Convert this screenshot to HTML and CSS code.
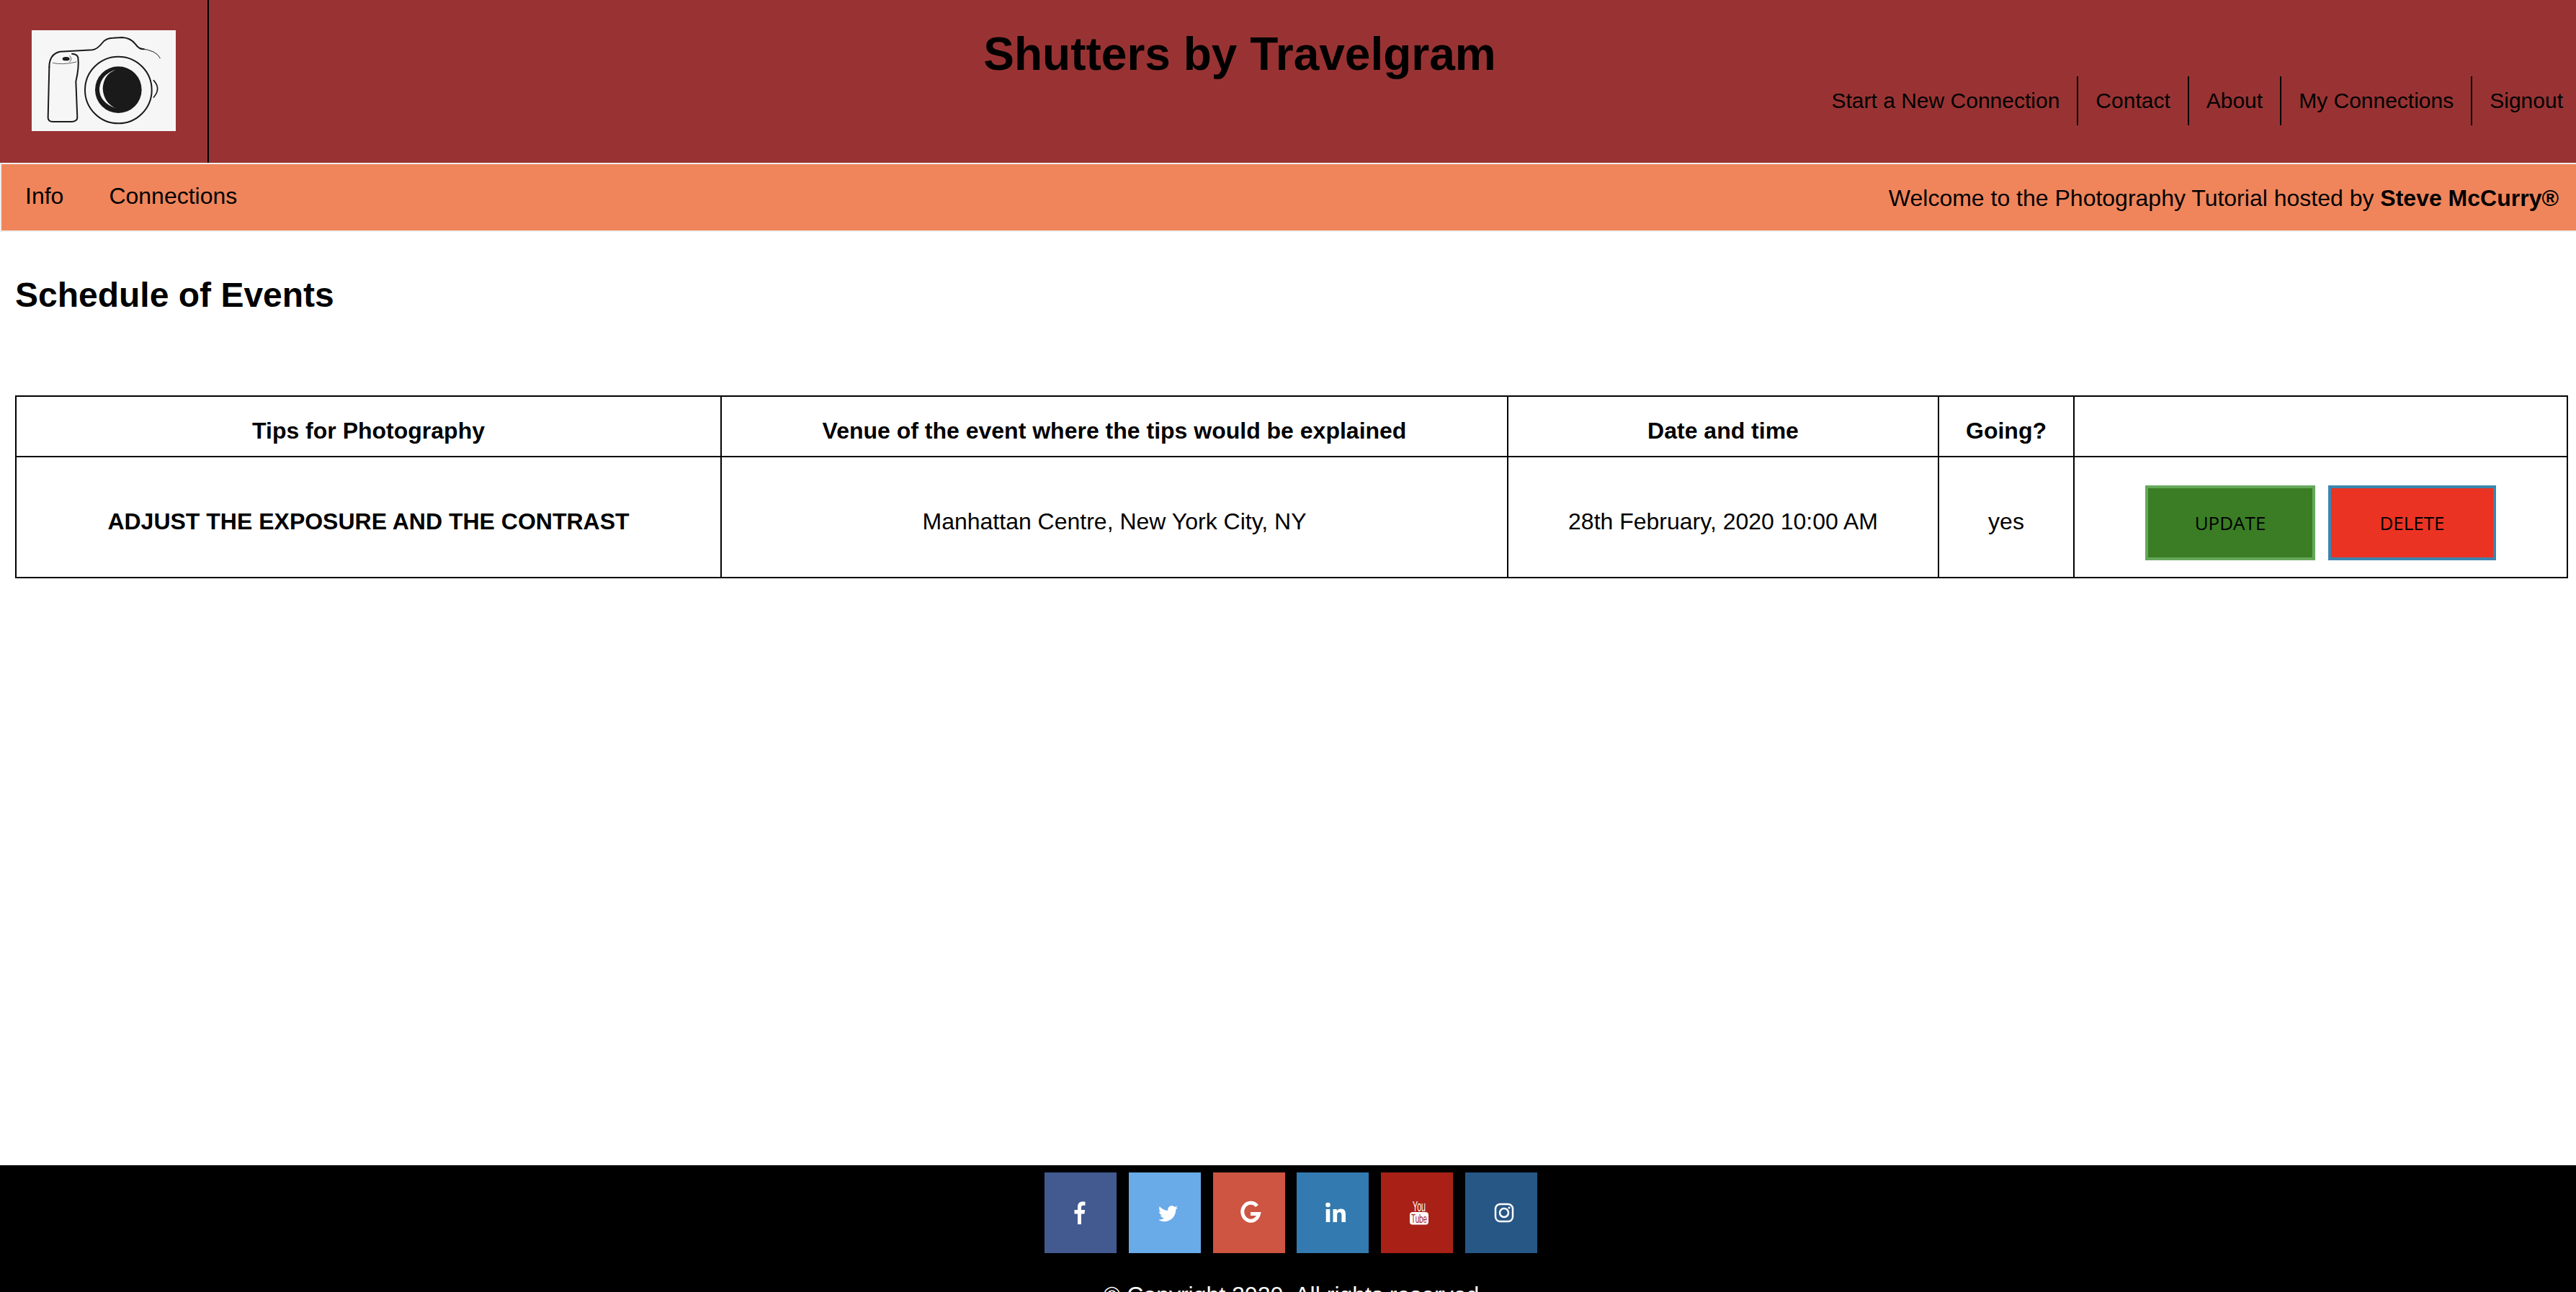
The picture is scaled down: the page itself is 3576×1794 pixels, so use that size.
FILE: index.html
```html
<!DOCTYPE html>
<html>
<head>
    <title>Shutters by Travelgram</title>
    <link rel="stylesheet" href="styles.css">
</head>
<body>
<div class="page">

    <header class="top">
        <div class="logo-cell">
            <svg class="logo" viewBox="132 126 600 420">
                <rect x="132" y="126" width="600" height="420" fill="#f6f6f6"/>
                <g fill="none" stroke="#1a1a1a" stroke-linecap="round">
                    <path stroke-width="6" d="M205 280 Q205 225 250 215 L385 208 Q405 205 425 180 Q440 158 470 158 L510 156 Q545 158 565 185 Q578 205 600 205"/>
                    <path stroke-width="3" d="M585 203 Q650 208 667 242"/>
                    <path stroke-width="6" d="M205 280 L200 490 Q200 507 220 507 L300 507 Q322 505 322 490 L316 340 Q330 280 325 240 Q322 225 300 224"/>
                    <path stroke-width="2" d="M220 262 Q260 272 318 258"/>
                    <circle cx="493" cy="375" r="139" stroke-width="6"/>
                    <path stroke-width="5" d="M640 335 Q672 370 640 405"/>
                    <path stroke-width="2" d="M290 232 Q304 245 290 258"/>
                </g>
                <ellipse cx="275" cy="245" rx="15" ry="8" fill="#1a1a1a"/>
                <circle cx="493" cy="374" r="97" fill="#1a1a1a"/>
                <path d="M482 290 Q430 310 428 370 Q432 430 484 452 Q412 425 414 368 Q420 310 482 290Z" fill="#f6f6f6"/>
            </svg>
        </div>
        <div class="top-main">
            <h1 class="site-title">Shutters by Travelgram</h1>
            <ul class="main-nav">
                <li><a href="#">Start a New Connection</a></li>
                <li><a href="#">Contact</a></li>
                <li><a href="#">About</a></li>
                <li><a href="#">My Connections</a></li>
                <li><a href="#">Signout</a></li>
            </ul>
        </div>
    </header>

    <nav class="sub-bar">
        <div class="sub-links">
            <a href="#">Info</a>
            <a href="#">Connections</a>
        </div>
        <p class="welcome">Welcome to the Photography Tutorial hosted by <b>Steve McCurry®</b></p>
    </nav>

    <main class="content">
        <h2 class="page-title">Schedule of Events</h2>
        <table class="events">
            <colgroup>
                <col class="col-tip">
                <col class="col-venue">
                <col class="col-date">
                <col class="col-going">
                <col class="col-actions">
            </colgroup>
            <tr class="head-row">
                <th>Tips for Photography</th>
                <th>Venue of the event where the tips would be explained</th>
                <th>Date and time</th>
                <th>Going?</th>
                <th></th>
            </tr>
            <tr class="event-row">
                <td class="tip">ADJUST THE EXPOSURE AND THE CONTRAST</td>
                <td>Manhattan Centre, New York City, NY</td>
                <td>28th February, 2020 10:00 AM</td>
                <td>yes</td>
                <td>
                    <div class="actions">
                        <button class="btn btn-update">UPDATE</button>
                        <button class="btn btn-delete">DELETE</button>
                    </div>
                </td>
            </tr>
        </table>
    </main>

    <footer class="bottom">
        <div class="socials">
            <a class="social fb" href="#">
                <svg width="40" height="40" viewBox="0 0 40 40"><path fill="#fff" d="M16 36V21.5h-4.500V16H16v-4.200C16 7 18.800 4.500 23 4.500c1.200 0 2.600.1 3.500.3v5h-2.600c-2 0-2.900 1-2.900 2.800V16h5.200l-.8 5.500H21V36z"/></svg>
            </a>
            <a class="social tw" href="#">
                <svg width="31" height="31" viewBox="0 0 24 24"><path fill="#fff" d="M22.460 6c-.77.35-1.600.58-2.460.69.880-.53 1.560-1.370 1.880-2.380-.83.5-1.750.85-2.720 1.050C18.370 4.500 17.260 4 16 4c-2.350 0-4.270 1.920-4.270 4.290 0 .34.040.67.110.98C8.280 9.090 5.110 7.380 3 4.790c-.37.63-.58 1.370-.58 2.150 0 1.490.750 2.810 1.910 3.560-.71 0-1.370-.2-1.950-.5v.03c0 2.080 1.480 3.820 3.440 4.210a4.220 4.220 0 0 1-1.930.07 4.280 4.280 0 0 0 4 2.980 8.520 8.520 0 0 1-5.330 1.840c-.34 0-.68-.02-1.020-.06C3.440 20.290 5.700 21 8.120 21 16 21 20.330 14.460 20.330 8.790c0-.19 0-.37-.01-.56.840-.6 1.560-1.360 2.140-2.230z"/></svg>
            </a>
            <a class="social gp" href="#">
                <svg width="40" height="40" viewBox="0 0 40 40"><path fill="none" stroke="#fff" stroke-width="5" d="M29 10.500A11.500 12.500 0 1 0 31.500 21.500H20"/></svg>
            </a>
            <a class="social li" href="#">
                <svg width="40" height="40" viewBox="0 0 40 40"><circle cx="9.500" cy="9" r="3.300" fill="#fff"/><path fill="#fff" d="M6.700 15h5.600v18H6.700zM16.500 15h5.300v2.600c1-1.800 3-3.100 5.700-3.100 5.100 0 6.500 3.300 6.500 8V33h-5.600v-9.300c0-2.500-.5-4.500-3-4.500s-3.300 2-3.300 4.500V33h-5.600z"/></svg>
            </a>
            <a class="social yt" href="#">
                <svg class="yt-icon" width="40" height="40" viewBox="0 0 40 40">
                    <rect x="7" y="19" width="26" height="17.500" rx="4" fill="#fff"/>
                    <text x="11" y="17.500" textLength="18" lengthAdjust="spacingAndGlyphs" class="yt-you">You</text>
                    <text x="9" y="33.500" textLength="22" lengthAdjust="spacingAndGlyphs" class="yt-tube">Tube</text>
                </svg>
            </a>
            <a class="social ig" href="#">
                <svg width="40" height="40" viewBox="0 0 40 40"><rect x="8" y="8" width="24" height="24" rx="6.500" fill="none" stroke="#fff" stroke-width="2.500"/><circle cx="20" cy="20" r="6" fill="none" stroke="#fff" stroke-width="2.500"/><circle cx="27" cy="13" r="1.500" fill="#fff"/></svg>
            </a>
        </div>
        <p class="copyright">© Copyright 2020. All rights reserved.</p>
    </footer>

</div>
</body>
</html>
```

FILE: styles.css
```css
html, body {
    margin: 0;
    padding: 0;
    height: 100%;
    overflow: hidden;
    background: #fff;
}

body {
    font-family: "Liberation Sans", Arial, sans-serif;
    font-size: 32px;
    color: #000;
}

a {
    color: #000;
    text-decoration: none;
}

.page {
    height: 1794px;
    display: flex;
    flex-direction: column;
    overflow: hidden;
}

/* top band */
.top {
    display: flex;
    height: 226px;
    background-color: #993333;
}

.logo-cell {
    width: 244px;
    padding: 42px 0 0 44px;
    border-right: 2px solid #000;
}

.logo {
    display: block;
    width: 200px;
    height: 140px;
}

.top-main {
    flex: 1;
    display: flex;
    flex-direction: column;
}

.site-title {
    margin: 38px 0 0;
    padding-right: 424px;
    font-size: 64px;
    line-height: 74px;
    text-align: center;
}

.main-nav {
    list-style: none;
    display: flex;
    justify-content: flex-end;
    margin: -6px 18px 0 0;
    padding: 0;
    font-size: 30px;
}

.main-nav li {
    height: 68px;
    line-height: 68px;
    padding: 0 24px;
    border-right: 2px solid #000;
}

.main-nav li:last-child {
    border-right: 0;
    padding-right: 0;
}

/* orange bar */
.sub-bar {
    display: flex;
    justify-content: space-between;
    align-items: center;
    height: 92px;
    background-color: #f0855b;
    border: 2px solid #eeeeee;
    border-right: 0;
}

.sub-links {
    display: flex;
    gap: 63px;
    padding-left: 33px;
    margin-top: -3px;
}

.welcome {
    margin: 2px 24px 0 0;
}

/* schedule */
.content {
    flex: 1;
    padding: 0 12px 0 21px;
}

.page-title {
    margin: 60px 0 111px;
    font-size: 48px;
    line-height: 56px;
}

.events {
    width: 3542px;
    table-layout: fixed;
    border-collapse: collapse;
}

.col-tip { width: 979px; }
.col-venue { width: 1092px; }
.col-date { width: 598px; }
.col-going { width: 188px; }
.col-actions { width: 685px; }

.events th,
.events td {
    border: 2px solid #000;
    padding: 13px 0 0;
    text-align: center;
}

.head-row {
    height: 84px;
}

.event-row {
    height: 168px;
}

.tip {
    font-weight: bold;
}

.actions {
    display: flex;
    justify-content: center;
    gap: 18px;
    margin-top: 3px;
}

.btn {
    width: 236px;
    height: 104px;
    border: 4px solid;
    font-family: "Open Sans", sans-serif;
    font-size: 26px;
    color: #000;
    padding: 0;
}

.btn-update {
    background-color: #3a7d24;
    border-color: #65a85a;
}

.btn-delete {
    width: 233px;
    background-color: #eb3323;
    border-color: #3c85b0;
}

/* footer */
.bottom {
    background-color: #000;
    height: 176px;
    flex-shrink: 0;
}

.socials {
    display: flex;
    justify-content: center;
    gap: 16.800px;
    padding: 10px 0 0 8px;
}

.social {
    box-sizing: border-box;
    width: 100px;
    height: 112px;
    display: flex;
    align-items: center;
    justify-content: center;
}

.fb { background-color: #425a8f; }
.tw { background-color: #69aae9; padding-left: 10px; }
.gp { background-color: #cd5542; padding-left: 5px; }
.li { background-color: #337ab0; padding-left: 8px; }
.yt { background-color: #a92116; padding-left: 6px; }
.ig { background-color: #275785; padding-left: 8px; }

.yt-icon {
    overflow: visible;
}

.yt-you {
    font-size: 20px;
    fill: #fff;
}

.yt-tube {
    font-size: 17px;
    fill: #a92116;
}

.copyright {
    margin: 40px 0 0;
    padding-left: 18px;
    text-align: center;
    color: #fff;
}
```
